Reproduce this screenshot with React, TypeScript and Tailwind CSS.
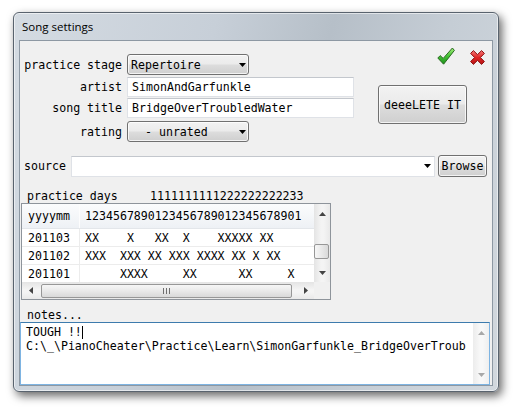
import React from "react";

const M = "font-['DejaVu_Sans_Mono',monospace] text-[11.6px] leading-[14px] text-black whitespace-pre";

function TriDown({ color = "#000" }: { color?: string }) {
  return (
    <svg width="7" height="4" viewBox="0 0 7 4" className="block shrink-0">
      <path d="M0 0H7L3.5 4Z" fill={color} />
    </svg>
  );
}
function TriUp({ color = "#000" }: { color?: string }) {
  return (
    <svg width="7" height="4" viewBox="0 0 7 4" className="block shrink-0">
      <path d="M0 4H7L3.5 0Z" fill={color} />
    </svg>
  );
}
function TriLeft({ color = "#000" }: { color?: string }) {
  return (
    <svg width="4" height="7" viewBox="0 0 4 7" className="block shrink-0">
      <path d="M4 0V7L0 3.5Z" fill={color} />
    </svg>
  );
}
function TriRight({ color = "#000" }: { color?: string }) {
  return (
    <svg width="4" height="7" viewBox="0 0 4 7" className="block shrink-0">
      <path d="M0 0V7L4 3.5Z" fill={color} />
    </svg>
  );
}

function Combo({ text }: { text: string }) {
  return (
    <div className="flex h-[21px] w-[122px] items-center justify-between rounded-[3px] border border-[#707070] bg-[linear-gradient(180deg,#f2f2f2_0%,#ebebeb_48%,#dddddd_52%,#cfcfcf_100%)] pl-[3px] pr-[2px] shadow-[inset_0_0_0_1px_rgba(255,255,255,0.75)]">
      <span className={M}>{text}</span>
      <TriDown />
    </div>
  );
}

function TextBox({ text }: { text: string }) {
  return (
    <div className="flex h-[20px] w-[227px] items-center border border-[#dfe2e7] border-t-[#c3c7cd] bg-white pl-[4px]">
      <span className={M}>{text}</span>
    </div>
  );
}

function CheckIcon() {
  return (
    <svg width="18" height="18" viewBox="0 0 18 18" className="block">
      <defs>
        <linearGradient id="chk" x1="0" y1="0" x2="0" y2="1">
          <stop offset="0" stopColor="#a6ee7c" />
          <stop offset="0.5" stopColor="#43c234" />
          <stop offset="1" stopColor="#1c8f1c" />
        </linearGradient>
      </defs>
      <path
        d="M0.8 11 L3.2 8.6 L6.2 11.4 L15.4 1 L17.4 3.4 L6.6 17.2 Z"
        fill="url(#chk)"
        stroke="#2a6a22"
        strokeWidth="1"
        strokeLinejoin="round"
      />
    </svg>
  );
}

function CrossIcon() {
  return (
    <svg width="15" height="15" viewBox="0 0 15 15" className="block">
      <defs>
        <linearGradient id="crs" x1="0" y1="0" x2="0" y2="1">
          <stop offset="0" stopColor="#f47a7a" />
          <stop offset="0.5" stopColor="#e02626" />
          <stop offset="1" stopColor="#b51414" />
        </linearGradient>
      </defs>
      <path
        d="M0.6 3.4 L3.4 0.6 L7.5 4.6 L11.6 0.6 L14.4 3.4 L10.4 7.5 L14.4 11.6 L11.6 14.4 L7.5 10.4 L3.4 14.4 L0.6 11.6 L4.6 7.5 Z"
        fill="url(#crs)"
        stroke="#8c1111"
        strokeWidth="1"
        strokeLinejoin="round"
      />
    </svg>
  );
}

const rows: [string, string][] = [
  ["201103", "XX    X   XX  X    XXXXX XX"],
  ["201102", "XXX  XXX XX XXX XXXX XX X XX"],
  ["201101", "     XXXX     XX      XX     X"],
];

export default function App() {
  return (
    <div className="h-[412px] w-[516px] overflow-hidden bg-white pl-[13px] pt-[12px]">
      <div className="flex h-[380px] w-[486px] flex-col rounded-[6px] border border-[#59636e] bg-[linear-gradient(105deg,#d4dbe2_0%,#c7cfd8_35%,#b6bfc8_55%,#c5cdd5_75%,#d2d8de_100%)] px-[5px] pb-[5px] shadow-[3px_4px_10px_rgba(0,0,0,0.6),inset_0_0_0_1px_rgba(255,255,255,0.55)]">
        <div className="flex h-[27px] shrink-0 items-center pl-[3px] font-['Open_Sans',sans-serif] text-[11.5px] text-black">
          Song settings
        </div>
        <div className="flex flex-1 flex-col border border-[#8d98a3] bg-[#f0f0f0]">
          {/* top section */}
          <div className="flex">
            <div className="ml-[4px] mt-[13px] flex flex-col">
              <div className="flex items-center gap-[5px]">
                <div className={`w-[98px] text-right ${M}`}>practice stage</div>
                <Combo text="Repertoire" />
              </div>
              <div className="mt-[2px] flex items-center gap-[5px]">
                <div className={`w-[98px] text-right ${M}`}>artist</div>
                <TextBox text="SimonAndGarfunkle" />
              </div>
              <div className="mt-[1px] flex items-center gap-[5px]">
                <div className={`w-[98px] text-right ${M}`}>song title</div>
                <TextBox text="BridgeOverTroubledWater" />
              </div>
              <div className="mt-[3px] flex items-center gap-[5px]">
                <div className={`w-[98px] text-right ${M}`}>rating</div>
                <Combo text="  - unrated" />
              </div>
            </div>
            <div className="ml-[24px] flex flex-col pt-[6px]">
              <div className="ml-[59px] flex items-end gap-[15px]">
                <CheckIcon />
                <CrossIcon />
              </div>
              <div className="mt-[20px] flex h-[39px] w-[89px] items-center justify-center rounded-[3px] border border-[#707070] bg-[linear-gradient(180deg,#f2f2f2_0%,#ebebeb_48%,#dddddd_52%,#cfcfcf_100%)] shadow-[inset_0_0_0_1px_rgba(255,255,255,0.75)]">
                <span className={M}>deeeLETE IT</span>
              </div>
            </div>
          </div>

          {/* source row */}
          <div className="ml-[4px] mt-[13px] flex h-[22px] items-center">
            <div className={`w-[47px] ${M}`}>source</div>
            <div className="flex h-[21px] w-[364px] items-center justify-end border border-[#dfe2e7] border-t-[#c3c7cd] bg-white pr-[3px]">
              <TriDown />
            </div>
            <div className="ml-[3px] flex h-[22px] w-[49px] items-center justify-center rounded-[3px] border border-[#707070] bg-[linear-gradient(180deg,#f2f2f2_0%,#ebebeb_48%,#dddddd_52%,#cfcfcf_100%)] shadow-[inset_0_0_0_1px_rgba(255,255,255,0.75)]">
              <span className={M}>Browse</span>
            </div>
          </div>

          {/* practice days label */}
          <div className="ml-[7px] mt-[12px] flex h-[14px]">
            <span className={`w-[123px] ${M}`}>practice days</span>
            <span className={M}>1111111111222222222233</span>
          </div>

          {/* grid */}
          <div className="ml-[1px] flex h-[97px] w-[310px] flex-col border border-[#8e949b] bg-white">
            <div className="flex h-[78px]">
              <div className="flex w-[292px] flex-col overflow-hidden">
                <div className="flex h-[25px] shrink-0 border-b border-[#e3e6ea] bg-[linear-gradient(180deg,#fbfcfd,#eef1f5)]">
                  <div className={`flex w-[58px] items-center border-r border-[#fdfdfd] pl-[6px] ${M}`}>yyyymm</div>
                  <div className={`flex flex-1 items-center pl-[5px] ${M}`}>1234567890123456789012345678901</div>
                </div>
                {rows.map(([ym, days]) => (
                  <div key={ym} className="flex h-[18px] shrink-0 border-b border-[#ececec]">
                    <div className={`flex w-[58px] items-center border-r border-[#ececec] pl-[6px] ${M}`}>{ym}</div>
                    <div className={`flex flex-1 items-center pl-[5px] ${M}`}>{days}</div>
                  </div>
                ))}
              </div>
              <div className="flex w-[16px] flex-col bg-[linear-gradient(90deg,#e4e4e4,#f4f4f4_45%,#f4f4f4_60%,#e9e9e9)]">
                <div className="flex h-[20px] items-center justify-center">
                  <TriUp color="#444" />
                </div>
                <div className="h-[20px]" />
                <div className="h-[15px] w-[15px] rounded-[2px] border border-[#979797] bg-[linear-gradient(90deg,#f6f6f6,#e9e9e9_50%,#d9d9d9)]" />
                <div className="flex-1" />
                <div className="flex h-[18px] items-center justify-center">
                  <TriDown color="#444" />
                </div>
              </div>
            </div>
            <div className="flex h-[17px]">
              <div className="flex w-[292px] items-center bg-[linear-gradient(180deg,#e4e4e4,#f4f4f4_45%,#f4f4f4_60%,#e9e9e9)]">
                <div className="flex w-[17px] justify-center">
                  <TriLeft color="#444" />
                </div>
                <div className="ml-[2px] flex h-[14px] w-[251px] items-center justify-center gap-[2px] rounded-[2px] border border-[#979797] bg-[linear-gradient(180deg,#f6f6f6,#e9e9e9_50%,#d9d9d9)]">
                  <div className="h-[6px] w-px bg-[#6f6f6f]" />
                  <div className="h-[6px] w-px bg-[#6f6f6f]" />
                  <div className="h-[6px] w-px bg-[#6f6f6f]" />
                </div>
                <div className="ml-[5px] flex w-[17px] justify-center">
                  <TriRight color="#444" />
                </div>
              </div>
              <div className="w-[16px] bg-[#f0f0f0]" />
            </div>
          </div>

          {/* notes */}
          <div className="ml-[7px] mt-[8px] flex h-[14px]">
            <span className={M}>notes...</span>
          </div>
          <div className="flex h-[63px] w-[470px] border border-[#7eb4e2] border-t-[#3d7bad] bg-white">
            <div className="flex flex-1 flex-col overflow-hidden pl-[5px] pt-[2px]">
              <div className="flex items-center">
                <span className={M}>TOUGH !!</span>
                <div className="h-[13px] w-px bg-black" />
              </div>
              <span className={M}>{"C:\\_\\PianoCheater\\Practice\\Learn\\SimonGarfunkle_BridgeOverTroub"}</span>
            </div>
            <div className="flex w-[16px] flex-col bg-[linear-gradient(90deg,#ececec,#f8f8f8_45%,#f8f8f8_60%,#efefef)]">
              <div className="flex h-[20px] items-center justify-center">
                <TriUp color="#a8a8a8" />
              </div>
              <div className="flex-1" />
              <div className="flex h-[18px] items-center justify-center">
                <TriDown color="#a8a8a8" />
              </div>
            </div>
          </div>
        </div>
      </div>
    </div>
  );
}
